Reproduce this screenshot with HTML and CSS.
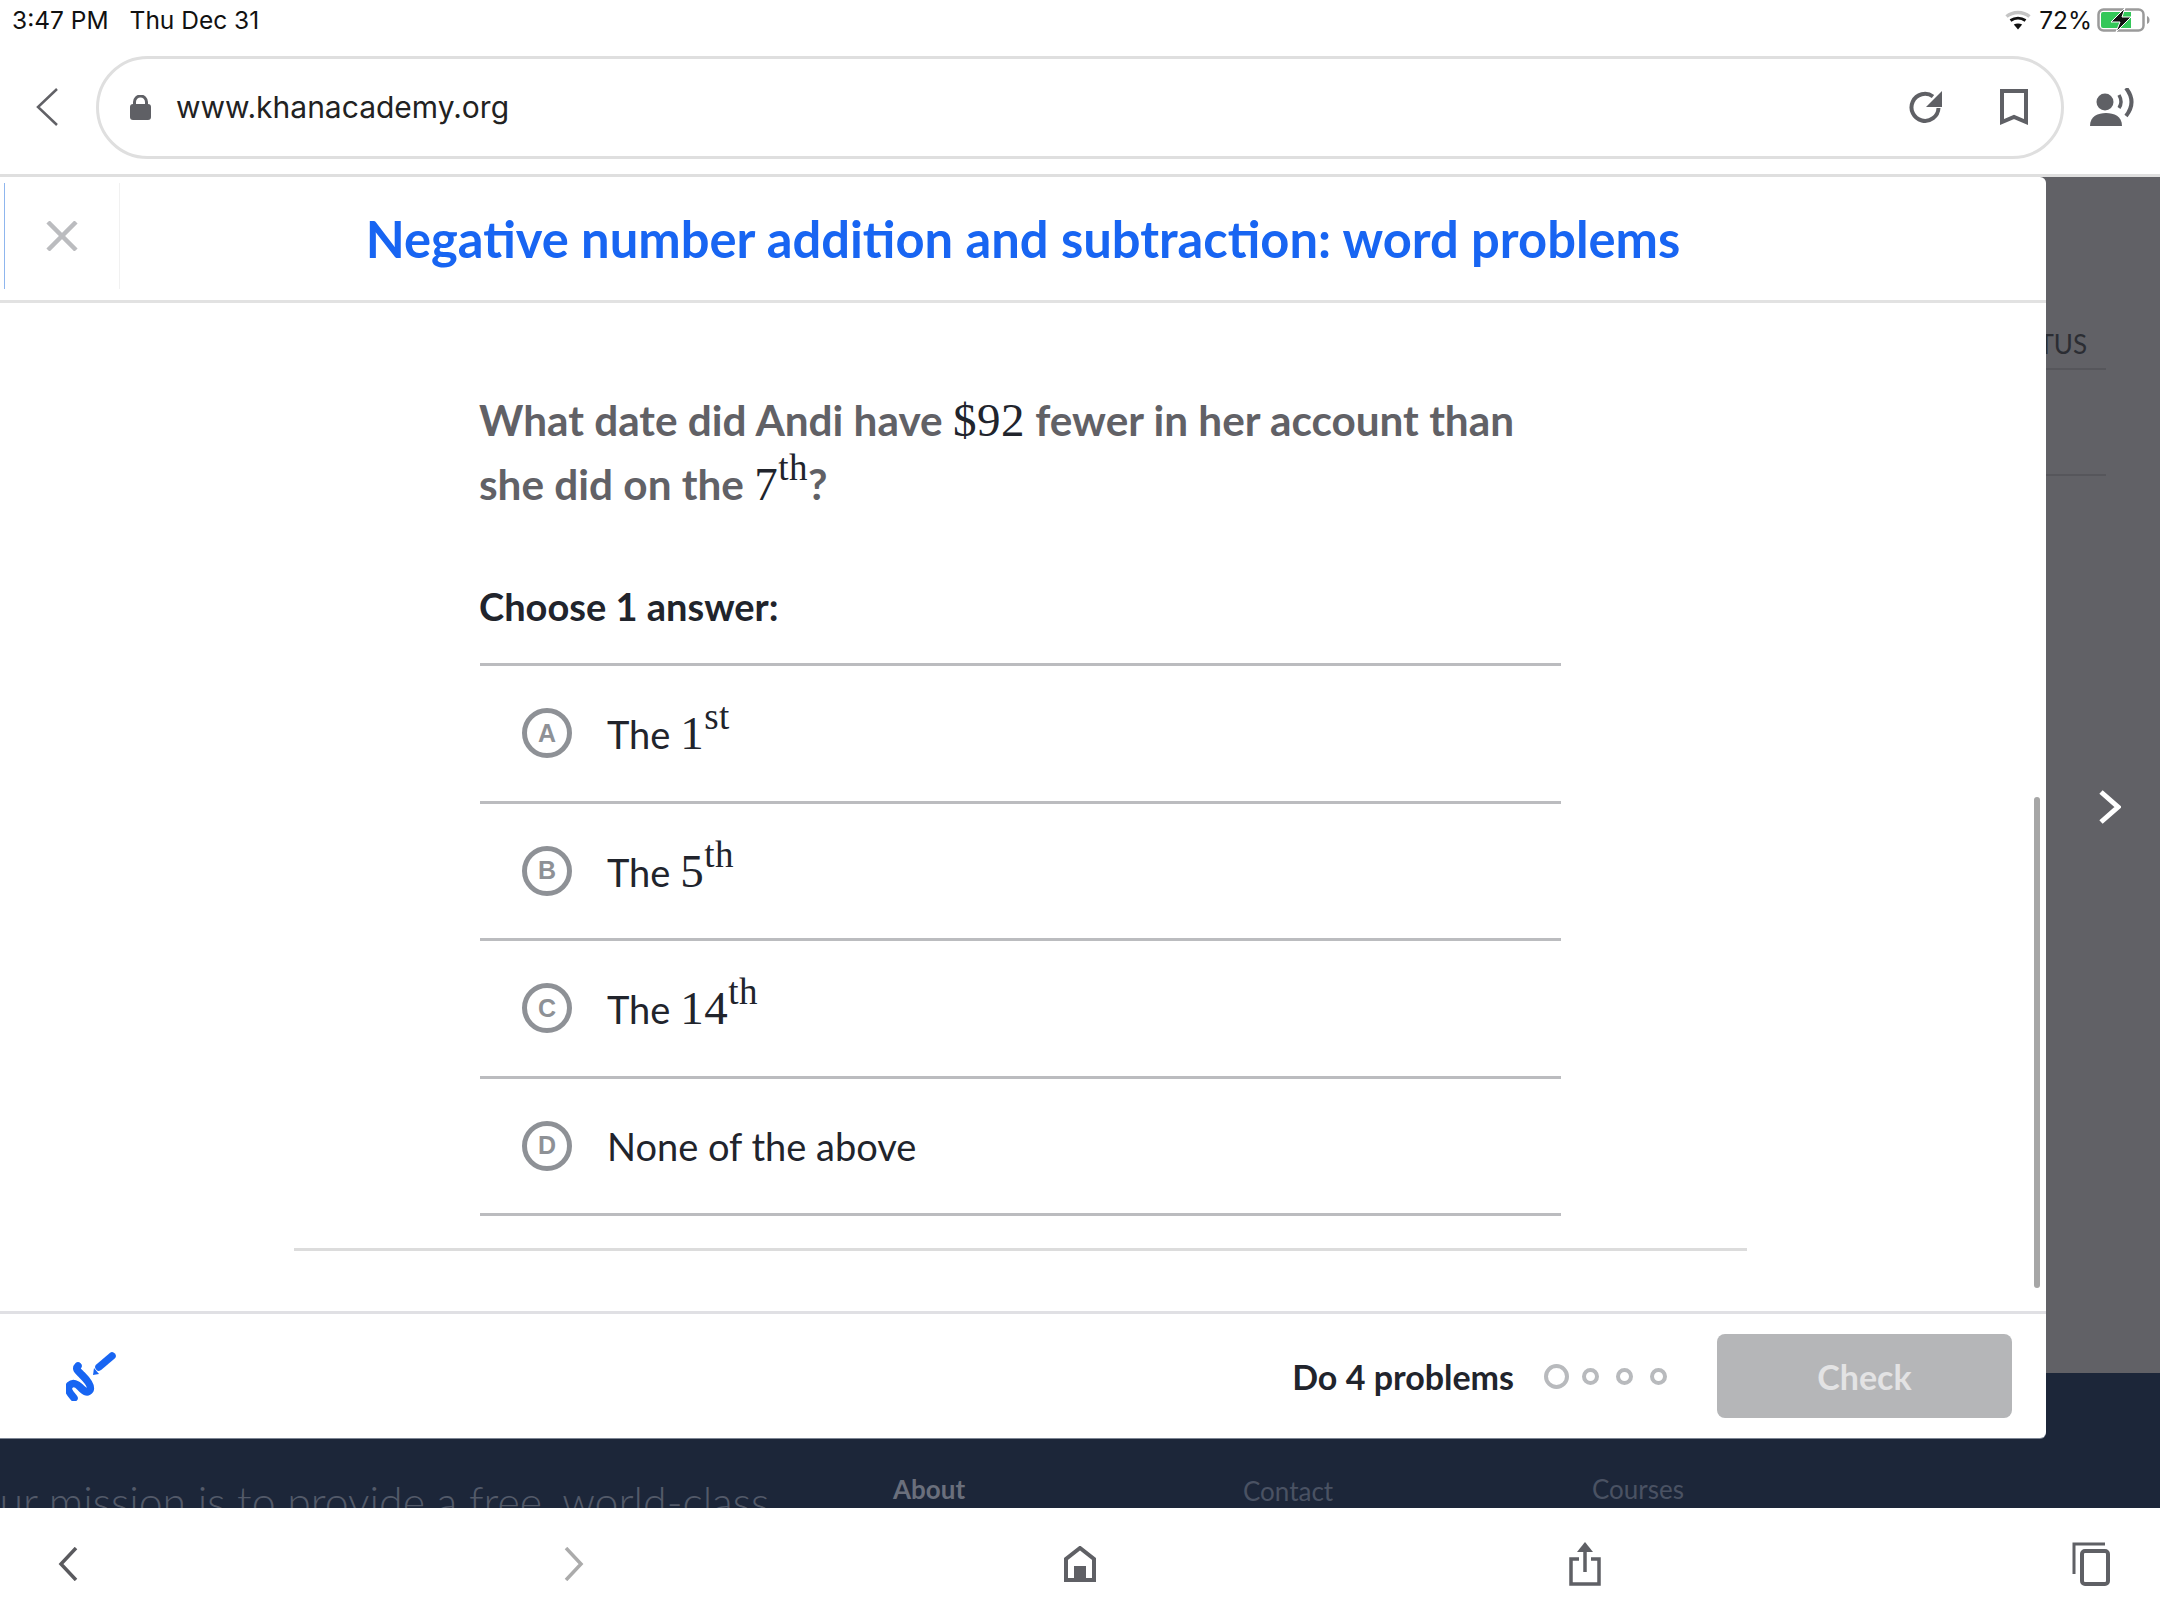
FILE: index.html
```html
<!DOCTYPE html>
<html lang="en">
  <head>
    <meta charset="utf-8">
    <title>Negative number addition and subtraction: word problems</title>
    <link rel="stylesheet" href="styles.css">
  </head>
  <body>
    <!-- ipad status bar -->
    <div class="status-bar">
      <div class="status-left">
        <span>3:47 PM</span>
        <span>Thu Dec 31</span>
      </div>
      <div class="status-right">
        <svg class="wifi" width="26" height="20" viewBox="0 0 26 20" fill="none">
          <path d="M1.5 6.5C8 1 18 1 24.500 6.500" stroke="#c4c4c4" stroke-width="3.500"/>
          <path d="M5.500 10.500C10 7.500 16 7.500 20.500 10.500" stroke="#111" stroke-width="3"/>
          <path d="M13 19.500L8.800 14.600C11.200 13 14.800 13 17.200 14.600Z" fill="#111"/>
        </svg>
        <span>72%</span>
        <svg class="battery" width="53" height="24" viewBox="0 0 53 24" fill="none">
          <rect x="1.500" y="1.500" width="45" height="21" rx="5" stroke="#9a9a9a" stroke-width="2.500"/>
          <path d="M4 6a2 2 0 0 1 2-2h28v16H6a2 2 0 0 1-2-2Z" fill="#34c759"/>
          <path d="M50 8c2 1 2.500 2 2.500 4s-.5 3-2.500 4Z" fill="#9a9a9a"/>
          <path d="M28 0L14 14H23L19 24L34 9H25Z" fill="#111" stroke="#fff" stroke-width="1"/>
        </svg>
      </div>
    </div>

    <!-- browser toolbar -->
    <div class="toolbar">
      <svg class="toolbar-back" width="24" height="40" viewBox="0 0 24 40" fill="none">
        <path d="M22 2L3 20L22 38" stroke="#616166" stroke-width="2.500"/>
      </svg>
      <div class="url-pill">
        <svg class="lock" width="21" height="25" viewBox="0 0 21 25">
          <path d="M4.500 10V7a6 6 0 0 1 12 0v3" fill="none" stroke="#5f6065" stroke-width="3"/>
          <rect x="0" y="9" width="21" height="16" rx="3" fill="#5f6065"/>
        </svg>
        <span class="url">www.khanacademy.org</span>
        <svg class="reload" width="34" height="32" viewBox="0 0 34 32" fill="none">
          <path d="M24 5.500A13.500 13.500 0 1 0 29.500 17" stroke="#5f6065" stroke-width="4"/>
          <path d="M33 0V16H17Z" fill="#5f6065"/>
        </svg>
        <svg class="bookmark" width="28" height="37" viewBox="0 0 28 37" fill="none">
          <path d="M2 2H26V33L14 28L2 33Z" stroke="#5f6065" stroke-width="4"/>
        </svg>
      </div>
      <svg class="reader" width="44" height="38" viewBox="0 0 44 38" fill="none">
        <circle cx="15" cy="14" r="8.500" fill="#5f6065"/>
        <path d="M0 38C0 28 8 25 16 25C24 25 32 28 32 38Z" fill="#5f6065"/>
        <path d="M29 7Q33 14 29 20" stroke="#5f6065" stroke-width="3.500"/>
        <path d="M36 0Q47 14 36 28" stroke="#5f6065" stroke-width="4"/>
      </svg>
    </div>

    <div class="stage">
      <!-- the page behind the dialog -->
      <div class="page-dim">
        <div class="side-panel">
          <div class="side-heading">STATUS</div>
          <div class="side-row"></div>
        </div>
      </div>
      <div class="page-footer">
        <div class="mission">Our mission is to provide a free, world-class</div>
        <div class="footer-link footer-link-about">About</div>
        <div class="footer-link footer-link-contact">Contact</div>
        <div class="footer-link">Courses</div>
      </div>

      <!-- exercise dialog -->
      <div class="dialog">
        <div class="dialog-header">
          <div class="close-cell">
            <svg width="32" height="30" viewBox="0 0 32 30" fill="none">
              <path d="M2 1L30 29M30 1L2 29" stroke="#bbbcbf" stroke-width="4.500"/>
            </svg>
          </div>
          <div class="dialog-title">Negative number addition and subtraction: word problems</div>
        </div>

        <div class="dialog-body">
          <div class="question">
            What date did Andi have <span class="math">$92</span> fewer in her account than
            she did on the <span class="math">7<sup>th</sup></span>?
          </div>
          <div class="choose">Choose 1 answer:</div>
          <div class="choices">
            <div class="choice">
              <span class="choice-letter">A</span>
              <span>The <span class="math">1<sup>st</sup></span></span>
            </div>
            <div class="choice">
              <span class="choice-letter">B</span>
              <span>The <span class="math">5<sup>th</sup></span></span>
            </div>
            <div class="choice">
              <span class="choice-letter">C</span>
              <span>The <span class="math">14<sup>th</sup></span></span>
            </div>
            <div class="choice">
              <span class="choice-letter">D</span>
              <span>None of the above</span>
            </div>
          </div>
          <hr class="body-end">
          <div class="scrollbar"></div>
        </div>

        <div class="dialog-footer">
          <svg class="scratchpad" width="50" height="50" viewBox="26 20 50 50" fill="none">
            <path d="M34 67C30 62 26 58 30 54C33 51 37 53 40 56C44 60 47 63 50 59C52 55 46 48 42 44C38 40 35 38 38 35" stroke="#1865f2" stroke-width="7.500" stroke-linecap="round"/>
            <path d="M59 36L72 25" stroke="#1865f2" stroke-width="7.500" stroke-linecap="round"/>
            <path d="M54 37L59 43L53 44Z" fill="#1865f2"/>
          </svg>
          <span class="do-problems">Do 4 problems</span>
          <div class="dots">
            <span class="dot dot-current"></span>
            <span class="dot"></span>
            <span class="dot"></span>
            <span class="dot"></span>
          </div>
          <div class="check-btn">Check</div>
        </div>
      </div>

      <svg class="next-arrow" width="22" height="34" viewBox="0 0 22 34" fill="none">
        <path d="M2 2L19 17L2 32" stroke="#fff" stroke-width="5"/>
      </svg>
    </div>

    <!-- browser bottom bar -->
    <div class="tab-bar">
      <div class="tab-item">
        <svg width="20" height="34" viewBox="0 0 20 34" fill="none">
          <path d="M18 1L3 17L18 33" stroke="#5a5a5e" stroke-width="3.500"/>
        </svg>
      </div>
      <div class="tab-item">
        <svg width="20" height="34" viewBox="0 0 20 34" fill="none">
          <path d="M2 1L17 17L2 33" stroke="#ababab" stroke-width="3.500"/>
        </svg>
      </div>
      <div class="tab-item">
        <svg width="32" height="36" viewBox="0 0 32 36" fill="none">
          <path d="M2 34V13L16 2L30 13V34Z" stroke="#5f6065" stroke-width="4"/>
          <rect x="10" y="20" width="12" height="14" fill="#5f6065"/>
        </svg>
      </div>
      <div class="tab-item">
        <svg width="32" height="44" viewBox="0 0 32 44" fill="none">
          <path d="M10 17H2V42H30V17H22" stroke="#5f6065" stroke-width="3.500"/>
          <path d="M16 30V6" stroke="#5f6065" stroke-width="3.500"/>
          <path d="M16 0L24 10H8Z" fill="#5f6065"/>
        </svg>
      </div>
      <div class="tab-item">
        <svg width="38" height="44" viewBox="0 0 38 44" fill="none">
          <path d="M2 32V2H33" stroke="#5f6065" stroke-width="3"/>
          <rect x="10" y="9" width="26" height="33" rx="3" stroke="#5f6065" stroke-width="4"/>
        </svg>
      </div>
    </div>
  </body>
</html>
```

FILE: styles.css
```css
* {
  box-sizing: border-box;
}
body {
  margin: 0;
  width: 2160px;
  height: 1620px;
  overflow: hidden;
  display: flex;
  flex-direction: column;
  background-color: #ffffff;
  font-family: Lato, "Open Sans", sans-serif;
  color: #21242c;
}
svg {
  display: block;
  flex-shrink: 0;
}

/* status bar */
.status-bar {
  height: 40px;
  padding: 0 10px 0 12px;
  display: flex;
  justify-content: space-between;
  align-items: center;
  font-family: Inter, Roboto, sans-serif;
  font-size: 24.500px;
  color: #111;
}
.status-left {
  display: flex;
  gap: 21px;
}
.status-right {
  display: flex;
  align-items: center;
  gap: 5px;
}
.wifi {
  margin-right: 3px;
}

/* toolbar */
.toolbar {
  height: 137px;
  display: flex;
  align-items: center;
  padding-left: 35px;
  border-bottom: 3px solid #dfdfdf;
}
.url-pill {
  width: 1968px;
  height: 103px;
  margin-left: 37px;
  padding: 0 33px 0 31px;
  display: flex;
  align-items: center;
  border: 3px solid #dfdfdf;
  border-radius: 52px;
}
.url {
  flex: 1;
  margin-left: 25px;
  font-family: Inter, Roboto, sans-serif;
  font-size: 30px;
  color: #222;
}
.bookmark {
  margin-left: 57px;
}
.reader {
  margin-left: 26px;
}

/* page behind the dialog */
.stage {
  position: relative;
  flex: 1;
  display: flex;
  flex-direction: column;
  overflow: hidden;
}
.page-dim {
  height: 1196px;
  display: flex;
  justify-content: flex-end;
  background-color: #616166;
}
.side-panel {
  width: 300px;
  height: 299px;
  margin-right: 54px;
  padding-top: 149px;
  color: #2b2d33;
}
.side-heading {
  height: 44px;
  padding-right: 19px;
  text-align: right;
  font-size: 26px;
  line-height: 36px;
  border-bottom: 2px solid #56565b;
}
.side-row {
  height: 106px;
  border-bottom: 2px solid #56565b;
}
.page-footer {
  flex: 1;
  display: flex;
  overflow: hidden;
  padding-top: 100px;
  background-color: #1c2639;
  font-size: 26px;
  color: #4a5263;
}
.mission {
  width: 927px;
  margin-left: -34px;
  margin-top: 5px;
  flex-shrink: 0;
  white-space: nowrap;
  font-size: 42.800px;
  font-weight: 300;
  line-height: 48px;
  color: #535a69;
}
.footer-link-about {
  width: 350px;
  font-weight: 700;
  color: #6a6f7c;
}
.footer-link-contact {
  width: 349px;
  margin-top: 2px;
}

/* dialog */
.dialog {
  position: absolute;
  left: 0;
  top: 0;
  width: 2046px;
  height: 1261px;
  display: flex;
  flex-direction: column;
  background-color: #ffffff;
  border-radius: 0 6px 6px 0;
  box-shadow: 0 1px 0 #7d8694;
}
.dialog-header {
  height: 126px;
  display: flex;
  align-items: center;
  border-bottom: 3px solid #e2e2e2;
}
.close-cell {
  width: 116px;
  height: 106px;
  margin-top: -6px;
  margin-left: 4px;
  padding-left: 41px;
  display: flex;
  align-items: center;
  border-left: 1px solid #8fb6ee;
  border-right: 1px solid #f1f1f1;
}
.dialog-title {
  flex: 1;
  padding-right: 120px;
  text-align: center;
  font-size: 50.700px;
  font-weight: 700;
  color: #1865f2;
}
.dialog-body {
  position: relative;
  flex: 1;
  padding: 85px 0 0 480px;
}
.question {
  width: 1060px;
  margin-left: -1px;
  font-size: 42.300px;
  font-weight: 700;
  line-height: 63px;
  color: #616166;
}
.math {
  font-family: "Liberation Serif", serif;
  font-size: 47px;
  font-weight: 400;
  color: #21242c;
  letter-spacing: 0.500px;
}
.math sup {
  font-size: 37px;
  line-height: 0;
  vertical-align: 20px;
}
.choose {
  margin-top: 66px;
  margin-left: -1px;
  font-size: 38px;
  font-weight: 700;
  line-height: 48px;
  color: #21242c;
}
.choices {
  width: 1081px;
  margin-top: 33px;
  border-top: 3px solid #bbbcbf;
}
.choice {
  height: 137.500px;
  display: flex;
  align-items: center;
  gap: 35px;
  padding-left: 42px;
  font-size: 38px;
  border-bottom: 3px solid #bbbcbf;
}
.choice-letter {
  width: 50px;
  height: 50px;
  display: flex;
  align-items: center;
  justify-content: center;
  border: 5px solid #8e9196;
  border-radius: 50%;
  font-family: "Liberation Sans", sans-serif;
  font-size: 25px;
  font-weight: 700;
  color: #8e9196;
}
.body-end {
  width: 1453px;
  height: 3px;
  margin: 32px 0 0 -186px;
  border: none;
  background-color: #dcdcdc;
}
.scrollbar {
  position: absolute;
  right: 6px;
  top: 494px;
  width: 6px;
  height: 491px;
  border-radius: 3px;
  background-color: #a6a6a6;
}
.dialog-footer {
  height: 127px;
  display: flex;
  align-items: center;
  padding: 0 34px 0 66px;
  border-top: 3px solid #e0e0e4;
}
.do-problems {
  margin-left: auto;
  font-size: 34px;
  font-weight: 700;
  color: #21242c;
}
.dots {
  display: flex;
  align-items: center;
  gap: 17px;
  margin-left: 30px;
}
.dot {
  width: 17px;
  height: 17px;
  border: 4px solid #b8babd;
  border-radius: 50%;
}
.dot-current {
  width: 25px;
  height: 25px;
  margin-right: -4px;
}
.check-btn {
  width: 295px;
  height: 84px;
  margin-left: 50px;
  display: flex;
  align-items: center;
  justify-content: center;
  border-radius: 8px;
  background-color: #b5b6b8;
  font-size: 34px;
  font-weight: 700;
  color: #e3e3e4;
}
.next-arrow {
  position: absolute;
  left: 2099px;
  top: 613px;
}

/* bottom bar */
.tab-bar {
  height: 112px;
  display: flex;
  align-items: center;
  justify-content: space-between;
  padding: 0 49px 0 48px;
}
.tab-item {
  width: 40px;
  display: flex;
  justify-content: center;
}
```
